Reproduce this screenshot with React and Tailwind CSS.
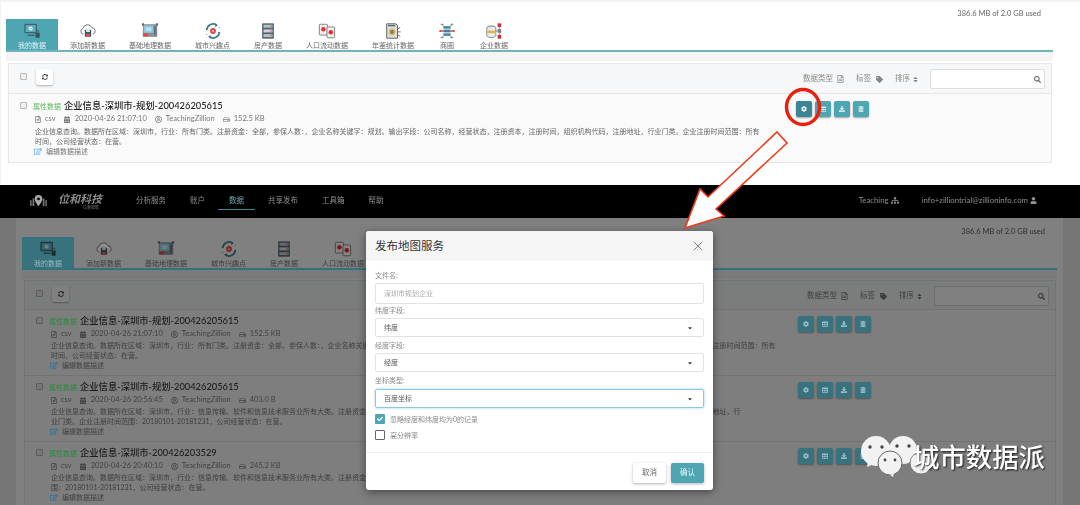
import { FaCog, FaTable, FaDownload, FaTrashAlt, FaSyncAlt, FaSearch, FaTag, FaSort, FaSitemap, FaUser, FaRegFileAlt, FaCalendarAlt, FaRegUserCircle, FaRegHdd, FaRegEdit, FaCheck, FaCaretDown } from 'react-icons/fa'
import { X } from 'lucide-react'

/* ── Icônes des onglets ── */

const IconMonitor = ({ active }) => (
  <svg viewBox="0 0 20 20" className="w-[18px] h-[18px]">
    <rect x="1.5" y="2" width="14" height="10.5" rx="1" fill="#3b6470" />
    <rect x="3" y="3.5" width="11" height="7.5" fill={active ? '#5fb4c4' : '#8fd0dc'} />
    <circle cx="8.5" cy="7.2" r="2.2" fill="#eef8fa" />
    <path d="M7.5 7.2l.8.8 1.4-1.5" stroke="#3b6470" strokeWidth=".7" fill="none" />
    <rect x="5" y="14" width="8" height="1.5" fill="#3b6470" />
    <rect x="14" y="12" width="4.5" height="5.5" rx=".6" fill="#34505a" />
    <path d="M15 12v-1.4a1.3 1.3 0 012.6 0V12" stroke="#34505a" strokeWidth=".8" fill="none" />
  </svg>
)

const IconCloud = () => (
  <svg viewBox="0 0 20 20" className="w-[18px] h-[18px]">
    <path d="M5 13.5a3.3 3.3 0 01-.4-6.5 5 5 0 019.6-.6 3.6 3.6 0 011 7.1" fill="#fff" stroke="#666" strokeWidth="1" />
    <rect x="6.5" y="8.5" width="7" height="8" rx=".6" fill="#37596b" />
    <rect x="8" y="8.5" width="4" height="2.6" fill="#e9eef0" />
    <rect x="8" y="13" width="4" height="3.5" fill="#d9574f" />
  </svg>
)

const IconMap = () => (
  <svg viewBox="0 0 20 20" className="w-[18px] h-[18px]">
    <rect x="2" y="2.5" width="16" height="14" fill="#8a8f94" />
    <rect x="3" y="4" width="10.5" height="8" fill="#8fcbe0" />
    <rect x="5.5" y="6" width="6" height="4" fill="#bfe3ee" />
    <rect x="2.5" y="12.5" width="5" height="3.5" fill="#e2483f" />
    <rect x="14.5" y="5" width="2.5" height="10" fill="#6d7378" />
    <rect x="1" y="1.5" width="2.4" height="2.4" fill="#5d6368" />
    <rect x="16.6" y="1.5" width="2.4" height="2.4" fill="#5d6368" />
  </svg>
)

const IconPoi = () => (
  <svg viewBox="0 0 20 20" className="w-[18px] h-[18px]">
    <path d="M3 9a7 7 0 0111-5.5" stroke="#3f7f8f" strokeWidth="2" fill="none" />
    <path d="M17 11a7 7 0 01-11 5.5" stroke="#3f7f8f" strokeWidth="2" fill="none" />
    <path d="M13 1.5l2.5 2.8-3.4 1z" fill="#3f7f8f" />
    <path d="M7 18.5l-2.5-2.8 3.4-1z" fill="#3f7f8f" />
    <circle cx="10" cy="10" r="3.2" fill="#e2483f" />
    <circle cx="10" cy="10" r="1.1" fill="#f7c9c5" />
    <circle cx="17" cy="6" r=".8" fill="#999" />
    <circle cx="3" cy="14" r=".8" fill="#999" />
  </svg>
)

const IconServer = () => (
  <svg viewBox="0 0 20 20" className="w-[18px] h-[18px]">
    <rect x="3.5" y="1.5" width="13" height="17" fill="#4e6068" />
    <rect x="5" y="3" width="10" height="3.4" fill="#b7c1c6" />
    <rect x="5" y="8.2" width="10" height="3.4" fill="#cfd6d9" />
    <rect x="5" y="13.4" width="10" height="3.4" fill="#b7c1c6" />
    <circle cx="13.4" cy="4.7" r=".8" fill="#e2483f" />
    <circle cx="13.4" cy="9.9" r=".8" fill="#e2483f" />
    <circle cx="13.4" cy="15.1" r=".8" fill="#e2483f" />
  </svg>
)

const IconCards = () => (
  <svg viewBox="0 0 20 20" className="w-[18px] h-[18px]">
    <rect x="1.5" y="2.5" width="9" height="12" rx="1" fill="#f4eeee" stroke="#6b6b6b" strokeWidth=".9" />
    <rect x="10" y="5.5" width="8.5" height="12" rx="1" fill="#f4eeee" stroke="#6b6b6b" strokeWidth=".9" />
    <circle cx="6" cy="8" r="2.5" fill="#e22d33" />
    <circle cx="14.2" cy="11.5" r="2.5" fill="#e22d33" />
  </svg>
)

const IconYearbook = () => (
  <svg viewBox="0 0 20 20" className="w-[18px] h-[18px]">
    <path d="M3 2h10l2 2v14H3z" fill="#dde1e2" stroke="#5c666b" strokeWidth="1.1" />
    <rect x="4.5" y="3.2" width="8" height="1.6" fill="#5c666b" />
    <circle cx="9" cy="11" r="3.8" fill="#e5b24b" />
    <circle cx="9" cy="11" r="2" fill="#5f7f93" />
    <path d="M15 8l3-2M15 11h3.5M15 14l3 2" stroke="#5c666b" strokeWidth="1" />
  </svg>
)

const IconNetwork = () => (
  <svg viewBox="0 0 20 20" className="w-[18px] h-[18px]">
    <rect x="6" y="4.5" width="8" height="3" fill="#4b8ca5" />
    <rect x="6" y="8.5" width="8" height="3" fill="#3f7f98" />
    <rect x="6" y="12.5" width="8" height="3" fill="#4b8ca5" />
    <path d="M2 10h4M14 10h4" stroke="#e2483f" strokeWidth="1.4" />
    <circle cx="2.5" cy="10" r="1.2" fill="#e2483f" />
    <circle cx="17.5" cy="10" r="1.2" fill="#e2483f" />
    <path d="M3 2.5h2.5v2M17 2.5h-2.5v2M3 17.5h2.5v-2M17 17.5h-2.5v-2" stroke="#555" strokeWidth=".9" fill="none" />
  </svg>
)

const IconCompany = () => (
  <svg viewBox="0 0 20 20" className="w-[18px] h-[18px]">
    <ellipse cx="7" cy="6.5" rx="5" ry="2.2" fill="#d6dadc" stroke="#5c666b" strokeWidth=".8" />
    <path d="M2 6.5v8.5c0 1.2 2.2 2.2 5 2.2s5-1 5-2.2V6.5" fill="#eceff0" stroke="#5c666b" strokeWidth=".8" />
    <rect x="2.4" y="9.5" width="9.2" height="3" fill="#e5b24b" />
    <rect x="14" y="1.5" width="4" height="4" fill="#c8303a" />
    <rect x="14" y="8" width="4" height="4" fill="#7b7f82" />
    <rect x="14" y="14.5" width="4" height="4" fill="#c8303a" />
    <path d="M12 10h2M16 5.5V8M16 12v2.5" stroke="#666" strokeWidth=".8" />
  </svg>
)

const TABS = [
  { label: '我的数据', Icon: IconMonitor, active: true },
  { label: '添加新数据', Icon: IconCloud },
  { label: '基础地理数据', Icon: IconMap },
  { label: '城市兴趣点', Icon: IconPoi },
  { label: '房产数据', Icon: IconServer },
  { label: '人口流动数据', Icon: IconCards },
  { label: '年鉴统计数据', Icon: IconYearbook },
  { label: '商圈', Icon: IconNetwork },
  { label: '企业数据', Icon: IconCompany },
]

const ACTIONS = [FaCog, FaTable, FaDownload, FaTrashAlt]

/* ── Deux versions de la page : claire en haut, assombrie sous la modale ── */

const LIGHT = {
  storage: 'text-[#666]',
  tabBg: 'bg-[#4fa6b3]',
  tabActiveText: 'text-[#e4f3f6]',
  tabText: 'text-[#666]',
  line: 'border-[#6fb3bf]',
  strip: 'bg-[#f5f5f5]',
  panel: 'border-[#e6e6e6]',
  panelTop: 'mt-[2px]',
  head: 'bg-[#f6f7f8] h-[30px]',
  row: 'bg-[#fafafa] h-[68px] pt-[5px]',
  check: 'bg-[#eee] border-[#bbb]',
  refresh: 'bg-white text-[#444]',
  muted: 'text-[#888]',
  search: 'bg-white border-[#ddd] text-[#666]',
  tag: 'text-[#5cb85c]',
  title: 'text-[#222]',
  meta: 'text-[#777]',
  desc: 'text-[#666]',
  descTop: 'mt-[3px]',
  edit: 'text-[#5aaee0]',
  btn: 'bg-[#4fa6b3] text-[#d9eef1]',
  icon: '',
  contentW: 'w-[761px]',
}

const DIM = {
  storage: 'text-[#2e2e2e]',
  tabBg: 'bg-[#38727c]',
  tabActiveText: 'text-[#9ab8bd]',
  tabText: 'text-[#3c3c3c]',
  line: 'border-[#2f737f]',
  strip: 'bg-[#7b7b7b]',
  panel: 'border-[#737373]',
  panelTop: 'mt-px',
  head: 'bg-[#7b7c7c] h-[29px]',
  row: 'bg-[#7e7e7e] h-[66px] pt-[4px]',
  check: 'bg-[#777] border-[#5c5c5c]',
  refresh: 'bg-[#808080] text-[#222]',
  muted: 'text-[#3f3f3f]',
  search: 'bg-[#808080] border-[#6c6c6c] text-[#333]',
  tag: 'text-[#2c8a3c]',
  title: 'text-[#1c1c1c]',
  meta: 'text-[#424242]',
  desc: 'text-[#3e3e3e]',
  descTop: 'mt-[2px]',
  edit: 'text-[#2f6f96]',
  btn: 'bg-[#38727c] text-[#9cc0c5]',
  icon: 'brightness-[.55]',
  contentW: 'w-[747px]',
}

function Check({ t }) {
  return <span className={`block w-[7px] h-[7px] rounded-[1px] border ${t.check}`} />
}

function Tabs({ t }) {
  return (
    <div className={`flex items-stretch h-[33px] border-b-2 ${t.line}`}>
      {TABS.map(({ label, Icon, active }) => (
        <div
          key={label}
          className={`flex flex-col items-center pt-[3px] px-3 min-w-[42px] ${active ? t.tabBg : ''}`}
        >
          <div className={`h-[19px] ${t.icon}`}><Icon active={active} /></div>
          <span className={`mt-[1px] text-[7px] leading-[9px] whitespace-nowrap ${active ? t.tabActiveText : t.tabText}`}>{label}</span>
        </div>
      ))}
    </div>
  )
}

function Toolbar({ t }) {
  return (
    <div className={`flex items-start pt-[5px] pl-[11px] pr-[6px] border-b ${t.head} ${t.panel}`}>
      <span className="mt-[4px]"><Check t={t} /></span>
      <span className={`ml-[9px] w-[17px] h-[16px] flex items-center justify-center rounded-[2px] shadow-[0_1px_2px_rgba(0,0,0,0.3)] ${t.refresh}`}>
        <FaSyncAlt className="w-[6px] h-[6px]" />
      </span>
      <div className={`ml-auto flex items-center gap-3 text-[7.5px] ${t.muted}`}>
        <span className="flex items-center gap-[4px]">数据类型<FaRegFileAlt className="w-[7px] h-[8px]" /></span>
        <span className="flex items-center gap-[5px]">标签<FaTag className="w-[7px] h-[7px]" /></span>
        <span className="flex items-center gap-[3px]">排序<FaSort className="w-[5px] h-[7px]" /></span>
        <div className={`flex items-center justify-end w-[115px] h-[20px] pr-[3px] border rounded-[2px] ${t.search}`}>
          <FaSearch className="w-[7px] h-[7px]" />
        </div>
      </div>
    </div>
  )
}

function Row({ t, row, last }) {
  return (
    <div className={`flex pl-[11px] ${t.row} ${last ? '' : `border-b ${t.panel}`}`}>
      <div className="w-[15px] pt-[3px]"><Check t={t} /></div>
      <div className={`${t.contentW} shrink-0`}>
        <div className="flex items-center h-[14px] -ml-[2px]">
          <span className={`text-[7px] mr-[3px] ${t.tag}`}>属性数据</span>
          <span className={`text-[9.3px] font-medium whitespace-nowrap ${t.title}`}>{row.title}</span>
        </div>
        <div className={`flex items-center h-[10px] mt-[1px] text-[7.5px] whitespace-nowrap ${t.meta}`}>
          <FaRegFileAlt className="w-[6px] h-[7px] mr-1" />
          <span>csv</span>
          <FaCalendarAlt className="w-[6px] h-[7px] ml-2 mr-[5px]" />
          <span>{row.date}</span>
          <FaRegUserCircle className="w-[7px] h-[7px] ml-2 mr-1" />
          <span>TeachingZillion</span>
          <FaRegHdd className="w-[7px] h-[7px] ml-2 mr-1" />
          <span>{row.size}</span>
        </div>
        <div className={`${t.descTop} text-[7px] leading-[9.5px] whitespace-nowrap ${t.desc}`}>
          {row.lines.map(l => <div key={l}>{l}</div>)}
        </div>
        <div className="flex items-center h-[10px] -ml-px">
          <FaRegEdit className={`w-[8px] h-[9px] ${t.edit}`} />
          <span className={`ml-1 text-[7px] ${t.meta}`}>编辑数据描述</span>
        </div>
      </div>
      <div className="flex gap-[3px] pt-[2px]">
        {ACTIONS.map((Icon, i) => (
          <span
            key={i}
            className={`flex items-center justify-center w-[16px] h-[16px] rounded-[2px] shadow-[0_1px_2px_rgba(0,0,0,0.35)] ${i === 0 && t === LIGHT ? 'bg-[#3a8593] text-white' : t.btn}`}
          >
            <Icon className="w-[6px] h-[6px]" />
          </span>
        ))}
      </div>
    </div>
  )
}

function DataPanel({ t, rows }) {
  return (
    <>
      <div className={`flex justify-end h-[10px] pr-3 text-[7.5px] leading-[10px] ${t.storage}`}>386.6 MB of 2.0 GB used</div>
      <Tabs t={t} />
      <div className={`h-[9px] ${t.strip}`} />
      <div className={`ml-[2px] mr-px border ${t.panelTop} ${t.panel}`}>
        <Toolbar t={t} />
        {rows.map((r, i) => <Row key={r.date} t={t} row={r} last={i === rows.length - 1} />)}
      </div>
    </>
  )
}

/* ── Données ── */

// ponctuation pleine chasse, comme dans l'appli
const zh = s => s.replace(/:/g, '\uFF1A').replace(/,/g, '\uFF0C')

const ROW_A = {
  title: '企业信息-深圳市-规划-200426205615',
  date: '2020-04-26 21:07:10',
  size: '152.5 KB',
  lines: [
    zh('企业信息查询。数据所在区域:深圳市,行业:所有门类。注册资金:全部,参保人数:,企业名称关键字:规划。输出字段:公司名称,经营状态,注册资本,注册时间,组织机构代码,注册地址,行业门类。企业注册时间范围:所有'),
    zh('时间,公司经营状态:在营。'),
  ],
}

const ROW_B = {
  title: '企业信息-深圳市-规划-200426205615',
  date: '2020-04-26 20:56:45',
  size: '403.0 B',
  lines: [
    zh('企业信息查询。数据所在区域:深圳市,行业:信息传输、软件和信息技术服务业所有大类。注册资金:全部,参保人数:,企业名称关键字:规划。输出字段:公司名称,经营状态,注册资本,组织机构代码,注册地址,行'),
    zh('业门类。企业注册时间范围:20180101-20181231,公司经营状态:在营。'),
  ],
}

const ROW_C = {
  title: '企业信息-深圳市-200426203529',
  date: '2020-04-26 20:40:10',
  size: '245.2 KB',
  lines: [
    zh('企业信息查询。数据所在区域:深圳市,行业:信息传输、软件和信息技术服务业所有大类。注册资金:全部,参保人数:,输出字段:公司名称,经营状态,注册资本,注册地址,行业门类。企业注册时间范'),
    zh('围:20180101-20181231,公司经营状态:在营。'),
  ],
}

const NAV = ['分析服务', '账户', '数据', '共享发布', '工具箱', '帮助']

/* ── Navigation ── */

function Navbar() {
  return (
    <div className="flex items-start h-[33px] bg-black text-[#8f8f8f]">
      <svg viewBox="0 0 20 16" className="w-[17px] h-[14px] ml-[30px] mt-[9px]">
        <rect x="0" y="7" width="2" height="7" fill="#666" />
        <rect x="3" y="5" width="2" height="9" fill="#777" />
        <path d="M10 1a4.5 4.5 0 014.5 4.5c0 3-4.5 8.5-4.5 8.5S5.5 8.5 5.5 5.5A4.5 4.5 0 0110 1z" fill="#a8a8a8" />
        <circle cx="10" cy="5.5" r="1.7" fill="#000" />
        <rect x="15" y="5" width="2" height="9" fill="#777" />
        <rect x="18" y="7" width="2" height="7" fill="#666" />
      </svg>
      <div className="ml-[10px] mt-[8px] w-[46px] flex flex-col items-center">
        <span className="text-[11px] leading-[12px] italic font-bold text-[#8a8a8a]">位和科技</span>
        <span className="text-[4px] leading-[5px] text-[#777] self-end pr-1">位置智能</span>
      </div>
      <div className="flex gap-6 ml-[33px] text-[7.5px]">
        {NAV.map(n => (
          <span
            key={n}
            className={n === '数据'
              ? 'h-[25px] pt-[10px] px-[11px] -mx-[11px] border-b border-[#3f8793] text-[#6aa9b3]'
              : 'h-[25px] pt-[10px]'}
          >
            {n}
          </span>
        ))}
      </div>
      <div className="ml-auto mr-[43px] mt-[10px] flex gap-[23px] text-[7.8px] leading-[11px]">
        <span className="flex items-center gap-[2px]">Teaching<FaSitemap className="w-[8px] h-[7px]" /></span>
        <span className="flex items-center gap-[2px]">info+zilliontrial@zillioninfo.com<FaUser className="w-[7px] h-[7px]" /></span>
      </div>
    </div>
  )
}

/* ── Modale ── */

function Field({ label, value, first, focus }) {
  return (
    <>
      <div className={`h-[10px] text-[7px] leading-[10px] text-[#888] ${first ? 'mt-px' : 'mt-[3px]'}`}>{label}</div>
      <div className={`flex items-center justify-between h-[19px] pl-2 pr-[10px] rounded-[2px] border text-[7px] text-[#555] ${focus ? 'mt-[4px] border-[#8cc6ea] shadow-[0_0_3px_#9fd0ee]' : 'mt-[3px] border-[#e2e2e2]'}`}>
        {value}
        <FaCaretDown className="w-[6px] h-[6px] text-[#333]" />
      </div>
    </>
  )
}

function Modal() {
  return (
    <div className="absolute left-[366px] top-[231px] w-[347px] h-[259px] flex flex-col bg-white rounded-[3px] shadow-[0_2px_8px_rgba(0,0,0,0.45)]">
      <div className="flex items-center justify-between h-[30px] pl-[9px] pr-[7px] bg-[#f5f5f5] rounded-t-[3px]">
        <span className="text-[11.5px] text-[#333]">发布地图服务</span>
        <X className="w-[16px] h-[16px] text-[#666]" strokeWidth={1.2} />
      </div>
      <div className="px-[9px] pt-[9px]">
        <div className="h-[10px] text-[7px] leading-[10px] text-[#888]">文件名:</div>
        <div className="flex items-center h-[21px] mt-[3px] pl-2 rounded-[2px] border border-[#e2e2e2] text-[7px] text-[#aaa]">深圳市规划企业</div>
        <Field label="纬度字段:" value="纬度" first />
        <Field label="经度字段:" value="经度" />
        <Field label="坐标类型:" value="百度坐标" focus />
        <div className="flex items-center h-[10px] mt-[6px] text-[7px] text-[#888]">
          <span className="flex items-center justify-center w-[10px] h-[10px] rounded-[1px] bg-[#4fa6b3] text-white">
            <FaCheck className="w-[6px] h-[6px]" />
          </span>
          <span className="ml-[5px]">忽略经度和纬度均为0的记录</span>
        </div>
        <div className="flex items-center h-[10px] mt-[6px] text-[7px] text-[#888]">
          <span className="w-[10px] h-[10px] rounded-[1px] border border-[#666]" />
          <span className="ml-[5px]">高分辨率</span>
        </div>
      </div>
      <div className="flex justify-end gap-[5px] mt-[12px] pt-[10px] pr-[9px] border-t border-[#eee] text-[7.5px]">
        <span className="flex items-center justify-center w-[33px] h-[20px] rounded-[2px] bg-white text-[#666] shadow-[0_1px_3px_rgba(0,0,0,0.3)]">取消</span>
        <span className="flex items-center justify-center w-[33px] h-[20px] rounded-[2px] bg-[#4fa6b3] text-[#e4f3f6] shadow-[0_1px_3px_rgba(0,0,0,0.3)]">确认</span>
      </div>
    </div>
  )
}

/* ── Annotations et filigrane ── */

function Annotations() {
  return (
    <svg viewBox="0 0 1080 505" className="absolute left-0 top-0 w-[1080px] h-[505px] pointer-events-none">
      <ellipse cx="803" cy="107" rx="16.5" ry="17.5" fill="none" stroke="#e8200e" strokeWidth="3.5" />
      <polygon points="777,132 787,143 716,209 724,216 685,228 700,189 708,197" fill="#fff" stroke="#f0381a" strokeWidth="1.6" />
    </svg>
  )
}

function Watermark() {
  return (
    <div className="absolute left-[860px] top-[436px] flex items-center">
      <svg viewBox="0 0 72 42" className="w-[72px] h-[42px]">
        <circle cx="16" cy="15" r="15" fill="#f2f2f2" />
        <path d="M8 25l-1 6 7-3z" fill="#f2f2f2" />
        <circle cx="43" cy="14" r="14" fill="#f2f2f2" />
        <circle cx="61" cy="27" r="11" fill="#f2f2f2" stroke="#666" strokeWidth=".8" />
        <circle cx="30" cy="27" r="12" fill="#f2f2f2" stroke="#666" strokeWidth="1" />
        <path d="M30 39l3 2 1-4z" fill="#f2f2f2" />
        <circle cx="10" cy="11" r="1.7" fill="#444" />
        <circle cx="22" cy="11" r="1.7" fill="#444" />
        <circle cx="37" cy="10" r="1.7" fill="#444" />
        <circle cx="49" cy="10" r="1.7" fill="#444" />
        <circle cx="25" cy="24" r="1.4" fill="#444" />
        <circle cx="35" cy="24" r="1.4" fill="#444" />
      </svg>
      <span className="-ml-[19px] text-[26.4px] leading-[30px] font-medium whitespace-nowrap text-white [text-shadow:1px_1px_2px_rgba(0,0,0,0.8)]">城市数据派</span>
    </div>
  )
}

export default function App() {
  return (
    <div className="relative w-[1080px] h-[505px] overflow-hidden bg-white font-['Lato','Noto_Sans_CJK_SC',sans-serif]">
      <div className="blur-[0.45px]">
        {/* capture du haut */}
        <div className="h-[185px] pt-[7px] pl-[5px] pr-[27px] border-t-2 border-l border-[#f3f3f3]">
          <DataPanel t={LIGHT} rows={[ROW_A]} />
        </div>

        {/* capture du bas, page assombrie */}
        <Navbar />
        <div className="flex h-[287px] bg-[#767676]">
          <div className="w-[16px] shrink-0" />
          <div className="flex-1 bg-[#808080] pt-[9px] pl-[6px] pr-[6px] overflow-hidden">
            <DataPanel t={DIM} rows={[ROW_A, ROW_B, ROW_C]} />
          </div>
          <div className="w-[17px] shrink-0" />
        </div>

        <Modal />
      </div>
      <Annotations />
      <Watermark />
    </div>
  )
}
